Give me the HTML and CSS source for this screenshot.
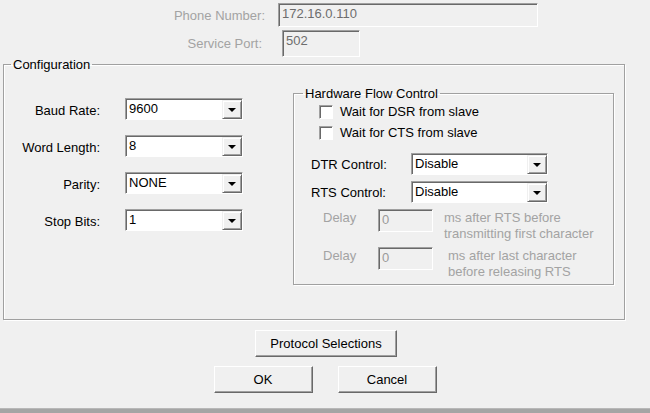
FILE: index.html
```html
<!DOCTYPE html>
<html lang="en">
<head>
  <meta charset="UTF-8" />
  <title>Connection Settings</title>
  <link rel="stylesheet" href="styles.css">
</head>
<body>
  <div class="dlg">
    <div class="top">
      <div class="row phone">
        <span class="lbl">Phone Number:</span>
        <div class="field dis">172.16.0.110</div>
      </div>
      <div class="row port">
        <span class="lbl">Service Port:</span>
        <div class="field dis">502</div>
      </div>
    </div>

    <fieldset class="config">
      <legend>Configuration</legend>
      <div class="cols">
        <div class="serial">
          <span class="lbl">Baud Rate:</span>
          <div class="combo"><span class="val">9600</span><span class="drop"><i></i></span></div>
          <span class="lbl">Word Length:</span>
          <div class="combo"><span class="val">8</span><span class="drop"><i></i></span></div>
          <span class="lbl">Parity:</span>
          <div class="combo"><span class="val">NONE</span><span class="drop"><i></i></span></div>
          <span class="lbl">Stop Bits:</span>
          <div class="combo"><span class="val">1</span><span class="drop"><i></i></span></div>
        </div>

        <fieldset class="hfc">
          <legend>Hardware Flow Control</legend>
          <label class="chk"><span class="box"></span>Wait for DSR from slave</label>
          <label class="chk"><span class="box"></span>Wait for CTS from slave</label>

          <div class="ctl first">
            <span class="clbl">DTR Control:</span>
            <div class="combo wide"><span class="val">Disable</span><span class="drop"><i></i></span></div>
          </div>
          <div class="ctl">
            <span class="clbl">RTS Control:</span>
            <div class="combo wide"><span class="val">Disable</span><span class="drop"><i></i></span></div>
          </div>

          <div class="delay">
            <span class="dlbl">Delay</span>
            <div class="field dis small">0</div>
            <span class="note">ms after RTS before<br>transmitting first character</span>
          </div>
          <div class="delay second">
            <span class="dlbl">Delay</span>
            <div class="field dis small">0</div>
            <span class="note">ms after last character<br>before releasing RTS</span>
          </div>
        </fieldset>
      </div>
    </fieldset>

    <div class="actions">
      <button class="btn proto">Protocol Selections</button>
      <div class="pair">
        <button class="btn">OK</button>
        <button class="btn">Cancel</button>
      </div>
    </div>
  </div>
  <div class="bar"></div>
</body>
</html>
```

FILE: styles.css
```css
body {
  margin: 0;
  background: #f0f0f0;
  font-family: "Liberation Sans", Arial, sans-serif;
  font-size: 13px;
  color: #000;
  width: 650px;
  height: 413px;
  overflow: hidden;
}
.dlg {
  height: 408px;
}
.top {
  padding-top: 3px;
}
.row {
  display: flex;
  align-items: center;
}
.row .lbl {
  color: #a3a3a3;
  text-align: right;
}
.phone .lbl {
  width: 265px;
  margin-right: 13px;
}
.phone .field {
  width: 260px;
  height: 24px;
}
.port {
  margin-top: 3px;
}
.port .lbl {
  width: 262px;
  margin-right: 20px;
}
.port .field {
  width: 78px;
  height: 27px;
}
.field {
  box-sizing: border-box;
  border: 1px solid #fff;
  border-top-color: #a0a0a0;
  border-left-color: #a0a0a0;
  box-shadow: inset 1px 1px 0 #696969;
  padding: 2px 0 0 3px;
  line-height: 16px;
}
.field.dis {
  background: #f0f0f0;
  color: #6d6d6d;
}
.field.small {
  width: 55px;
  height: 23px;
  color: #9a9a9a;
}

fieldset {
  margin: 0;
  padding: 0;
  border: 1px solid #a0a0a0;
  box-shadow: 1px 1px 0 #fff, inset 1px 1px 0 #fff;
}
legend {
  padding: 0 2px;
  margin-left: 7px;
  line-height: 15px;
}
.config {
  margin: 0 0 0 3px;
  width: 622px;
  height: 263px;
  box-sizing: border-box;
}
.cols {
  display: flex;
  align-items: flex-start;
}
.serial {
  display: grid;
  grid-template-columns: 96px 118px;
  column-gap: 25px;
  row-gap: 15px;
  align-items: center;
  margin-top: 26px;
}
.serial .lbl {
  text-align: right;
  padding-top: 2px;
}

.combo {
  box-sizing: border-box;
  display: flex;
  height: 22px;
  background: #fff;
  border: 1px solid #fff;
  border-top-color: #a0a0a0;
  border-left-color: #a0a0a0;
  box-shadow: inset 1px 1px 0 #696969;
}
.combo .val {
  flex: 1;
  padding: 2px 0 0 3px;
  line-height: 15px;
}
.combo.wide {
  width: 137px;
}
.drop {
  box-sizing: border-box;
  width: 20px;
  height: 19px;
  margin: 1px 0 0 0;
  background: #f0f0f0;
  border: 1px solid #696969;
  border-top-color: #f0f0f0;
  border-left-color: #f0f0f0;
  box-shadow: inset 1px 1px 0 #fff, inset -1px -1px 0 #a0a0a0;
  display: flex;
  align-items: center;
  justify-content: center;
}
.drop i {
  width: 0;
  height: 0;
  border-left: 4px solid transparent;
  border-right: 4px solid transparent;
  border-top: 4px solid #000;
  margin-top: 1px;
}

.hfc {
  margin: 14px 0 0 50px;
  width: 321px;
  height: 199px;
  box-sizing: border-box;
}
.hfc legend {
  margin-left: 9px;
}
.chk {
  display: flex;
  align-items: center;
  margin-left: 25px;
  height: 21px;
}
.box {
  box-sizing: border-box;
  width: 14px;
  height: 14px;
  margin-right: 7px;
  background: #fff;
  border: 1px solid #fff;
  border-top-color: #a0a0a0;
  border-left-color: #a0a0a0;
  box-shadow: inset 1px 1px 0 #696969;
}
.ctl {
  display: flex;
  align-items: center;
  margin-left: 17px;
  margin-top: 6px;
}
.ctl.first {
  margin-top: 10px;
}
.clbl {
  width: 100px;
}
.delay {
  display: flex;
  align-items: flex-start;
  margin: 6px 0 0 29px;
  color: #a3a3a3;
}
.delay.second {
  margin-top: 5px;
}
.dlbl {
  width: 55px;
  padding-top: 1px;
}
.note {
  margin-left: 11px;
  line-height: 16px;
  margin-top: 1px;
}
.delay.second .note {
  margin-left: 15px;
}

.actions {
  display: flex;
  flex-direction: column;
  align-items: center;
  margin-top: 10px;
}
.btn {
  box-sizing: border-box;
  font-family: inherit;
  font-size: 13px;
  background: #f0f0f0;
  color: #000;
  border: 1px solid #696969;
  border-top-color: #fff;
  border-left-color: #fff;
  box-shadow: inset -1px -1px 0 #a0a0a0;
  height: 27px;
  padding: 0;
}
.proto {
  width: 142px;
  margin-left: 2px;
}
.pair {
  display: flex;
  gap: 25px;
  margin-top: 9px;
}
.pair .btn {
  width: 99px;
}
.bar {
  height: 4px;
  background: #a5a5a5;
  border-top: 1px solid #b8b8b8;
}
```
